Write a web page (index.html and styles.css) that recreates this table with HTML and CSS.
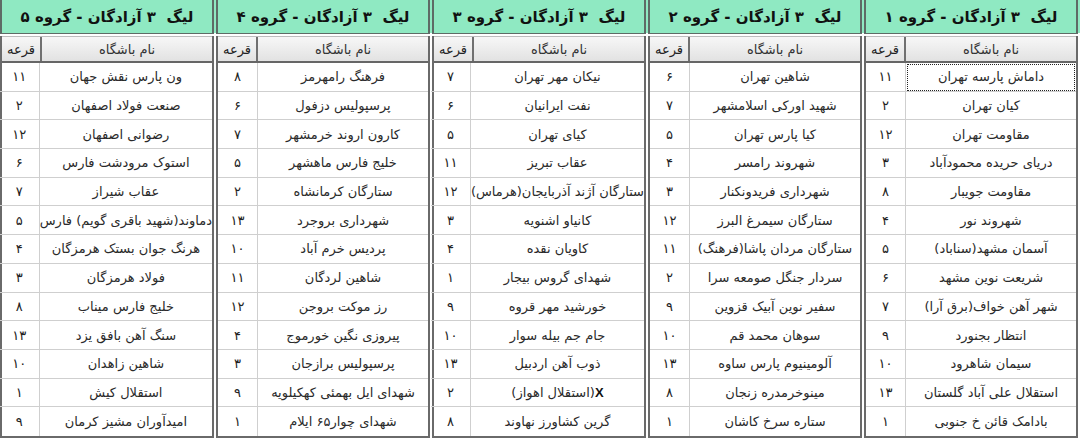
FILE: index.html
```html
<!DOCTYPE html>
<html lang="fa" dir="rtl">
<head>
<meta charset="utf-8">
<title>لیگ ۳ آزادگان</title>
<link rel="stylesheet" href="styles.css">
</head>
<body>
<div class="board">

  <section class="group">
    <div class="title">لیگ&nbsp; ۳ آزادگان - گروه ۱</div>
    <div class="table">
      <div class="row head"><div class="c-no">قرعه</div><div class="c-name">نام باشگاه</div></div>
      <div class="body">
        <div class="row"><div class="c-no">۱۱</div><div class="c-name selected"><span>داماش پارسه تهران</span></div></div>
        <div class="row"><div class="c-no">۲</div><div class="c-name"><span>کیان تهران</span></div></div>
        <div class="row"><div class="c-no">۱۲</div><div class="c-name"><span>مقاومت تهران</span></div></div>
        <div class="row"><div class="c-no">۳</div><div class="c-name"><span>دریای حریده محمودآباد</span></div></div>
        <div class="row"><div class="c-no">۸</div><div class="c-name"><span>مقاومت جویبار</span></div></div>
        <div class="row"><div class="c-no">۴</div><div class="c-name"><span>شهروند نور</span></div></div>
        <div class="row"><div class="c-no">۵</div><div class="c-name"><span>آسمان مشهد(سناباد)</span></div></div>
        <div class="row"><div class="c-no">۶</div><div class="c-name"><span>شریعت نوین مشهد</span></div></div>
        <div class="row"><div class="c-no">۷</div><div class="c-name"><span>شهر آهن خواف(برق آرا)</span></div></div>
        <div class="row"><div class="c-no">۹</div><div class="c-name"><span>انتظار بجنورد</span></div></div>
        <div class="row"><div class="c-no">۱۰</div><div class="c-name"><span>سیمان شاهرود</span></div></div>
        <div class="row"><div class="c-no">۱۳</div><div class="c-name"><span>استقلال علی آباد گلستان</span></div></div>
        <div class="row"><div class="c-no">۱</div><div class="c-name"><span>بادامک قائن خ جنوبی</span></div></div>
      </div>
    </div>
  </section>

  <section class="group">
    <div class="title">لیگ&nbsp; ۳ آزادگان - گروه ۲</div>
    <div class="table">
      <div class="row head"><div class="c-no">قرعه</div><div class="c-name">نام باشگاه</div></div>
      <div class="body">
        <div class="row"><div class="c-no">۶</div><div class="c-name"><span>شاهین تهران</span></div></div>
        <div class="row"><div class="c-no">۷</div><div class="c-name"><span>شهید اورکی اسلامشهر</span></div></div>
        <div class="row"><div class="c-no">۵</div><div class="c-name"><span>کیا پارس تهران</span></div></div>
        <div class="row"><div class="c-no">۴</div><div class="c-name"><span>شهروند رامسر</span></div></div>
        <div class="row"><div class="c-no">۳</div><div class="c-name"><span>شهرداری فریدونکنار</span></div></div>
        <div class="row"><div class="c-no">۱۲</div><div class="c-name"><span>ستارگان سیمرغ البرز</span></div></div>
        <div class="row"><div class="c-no">۱۱</div><div class="c-name"><span>ستارگان مردان پاشا(فرهنگ)</span></div></div>
        <div class="row"><div class="c-no">۲</div><div class="c-name"><span>سردار جنگل صومعه سرا</span></div></div>
        <div class="row"><div class="c-no">۹</div><div class="c-name"><span>سفیر نوین آبیک قزوین</span></div></div>
        <div class="row"><div class="c-no">۱۰</div><div class="c-name"><span>سوهان محمد قم</span></div></div>
        <div class="row"><div class="c-no">۱۳</div><div class="c-name"><span>آلومینیوم پارس ساوه</span></div></div>
        <div class="row"><div class="c-no">۸</div><div class="c-name"><span>مینوخرمدره زنجان</span></div></div>
        <div class="row"><div class="c-no">۱</div><div class="c-name"><span>ستاره سرخ کاشان</span></div></div>
      </div>
    </div>
  </section>

  <section class="group">
    <div class="title">لیگ&nbsp; ۳ آزادگان - گروه ۳</div>
    <div class="table">
      <div class="row head"><div class="c-no">قرعه</div><div class="c-name">نام باشگاه</div></div>
      <div class="body">
        <div class="row"><div class="c-no">۷</div><div class="c-name"><span>نیکان مهر تهران</span></div></div>
        <div class="row"><div class="c-no">۶</div><div class="c-name"><span>نفت ایرانیان</span></div></div>
        <div class="row"><div class="c-no">۵</div><div class="c-name"><span>کیای تهران</span></div></div>
        <div class="row"><div class="c-no">۱۱</div><div class="c-name"><span>عقاب تبریز</span></div></div>
        <div class="row"><div class="c-no">۱۲</div><div class="c-name"><span>ستارگان آژند آذربایجان(هرماس)</span></div></div>
        <div class="row"><div class="c-no">۳</div><div class="c-name"><span>کانیاو اشنویه</span></div></div>
        <div class="row"><div class="c-no">۴</div><div class="c-name"><span>کاویان نقده</span></div></div>
        <div class="row"><div class="c-no">۱</div><div class="c-name"><span>شهدای گروس بیجار</span></div></div>
        <div class="row"><div class="c-no">۹</div><div class="c-name"><span>خورشید مهر قروه</span></div></div>
        <div class="row"><div class="c-no">۱۰</div><div class="c-name"><span>جام جم بیله سوار</span></div></div>
        <div class="row"><div class="c-no">۱۳</div><div class="c-name"><span>ذوب آهن اردبیل</span></div></div>
        <div class="row"><div class="c-no">۲</div><div class="c-name"><b class="x">X</b><span>(استقلال اهواز)</span></div></div>
        <div class="row"><div class="c-no">۸</div><div class="c-name"><span>گرین کشاورز نهاوند</span></div></div>
      </div>
    </div>
  </section>

  <section class="group">
    <div class="title">لیگ&nbsp; ۳ آزادگان - گروه ۴</div>
    <div class="table">
      <div class="row head"><div class="c-no">قرعه</div><div class="c-name">نام باشگاه</div></div>
      <div class="body">
        <div class="row"><div class="c-no">۸</div><div class="c-name"><span>فرهنگ رامهرمز</span></div></div>
        <div class="row"><div class="c-no">۶</div><div class="c-name"><span>پرسپولیس دزفول</span></div></div>
        <div class="row"><div class="c-no">۷</div><div class="c-name"><span>کارون اروند خرمشهر</span></div></div>
        <div class="row"><div class="c-no">۵</div><div class="c-name"><span>خلیج فارس ماهشهر</span></div></div>
        <div class="row"><div class="c-no">۲</div><div class="c-name"><span>ستارگان کرمانشاه</span></div></div>
        <div class="row"><div class="c-no">۱۳</div><div class="c-name"><span>شهرداری بروجرد</span></div></div>
        <div class="row"><div class="c-no">۱۰</div><div class="c-name"><span>پردیس خرم آباد</span></div></div>
        <div class="row"><div class="c-no">۱۱</div><div class="c-name"><span>شاهین لردگان</span></div></div>
        <div class="row"><div class="c-no">۱۲</div><div class="c-name"><span>رز موکت بروجن</span></div></div>
        <div class="row"><div class="c-no">۴</div><div class="c-name"><span>پیروزی نگین خورموج</span></div></div>
        <div class="row"><div class="c-no">۳</div><div class="c-name"><span>پرسپولیس برازجان</span></div></div>
        <div class="row"><div class="c-no">۹</div><div class="c-name"><span>شهدای ایل بهمئی کهکیلویه</span></div></div>
        <div class="row"><div class="c-no">۱</div><div class="c-name"><span>شهدای چوار۶۵ ایلام</span></div></div>
      </div>
    </div>
  </section>

  <section class="group">
    <div class="title">لیگ&nbsp; ۳ آزادگان - گروه ۵</div>
    <div class="table">
      <div class="row head"><div class="c-no">قرعه</div><div class="c-name">نام باشگاه</div></div>
      <div class="body">
        <div class="row"><div class="c-no">۱۱</div><div class="c-name"><span>ون پارس نقش جهان</span></div></div>
        <div class="row"><div class="c-no">۲</div><div class="c-name"><span>صنعت فولاد اصفهان</span></div></div>
        <div class="row"><div class="c-no">۱۲</div><div class="c-name"><span>رضوانی اصفهان</span></div></div>
        <div class="row"><div class="c-no">۶</div><div class="c-name"><span>استوک مرودشت فارس</span></div></div>
        <div class="row"><div class="c-no">۷</div><div class="c-name"><span>عقاب شیراز</span></div></div>
        <div class="row"><div class="c-no">۵</div><div class="c-name"><span>دماوند(شهید باقری گویم) فارس</span></div></div>
        <div class="row"><div class="c-no">۴</div><div class="c-name"><span>هرنگ جوان بستک هرمزگان</span></div></div>
        <div class="row"><div class="c-no">۳</div><div class="c-name"><span>فولاد هرمزگان</span></div></div>
        <div class="row"><div class="c-no">۸</div><div class="c-name"><span>خلیج فارس میناب</span></div></div>
        <div class="row"><div class="c-no">۱۳</div><div class="c-name"><span>سنگ آهن بافق یزد</span></div></div>
        <div class="row"><div class="c-no">۱۰</div><div class="c-name"><span>شاهین زاهدان</span></div></div>
        <div class="row"><div class="c-no">۱</div><div class="c-name"><span>استقلال کیش</span></div></div>
        <div class="row"><div class="c-no">۹</div><div class="c-name"><span>امیدآوران مشیز کرمان</span></div></div>
      </div>
    </div>
  </section>

</div>
</body>
</html>
```

FILE: styles.css
```css
* { box-sizing: border-box; }

html, body {
  margin: 0;
  padding: 0;
}

body {
  width: 1080px;
  height: 440px;
  overflow: hidden;
  background: #ffffff;
  font-family: Tahoma, "DejaVu Sans", sans-serif;
  color: #2a2a2a;
}

.board {
  direction: rtl;
  display: flex;
  gap: 2px;
  padding-right: 2px;
  height: 440px;
  background:
    linear-gradient(to bottom, #8fe9c2 0, #8fe9c2 33px, transparent 33px),
    linear-gradient(to right, #d93a4a 0, #d93a4a 14px, #ffffff 14px, #ffffff 70px, #7cc98a 70px, #7cc98a 110px, #ffffff 110px, #ffffff 226px, #7cc98a 226px, #7cc98a 296px, #ffffff 296px, #ffffff 335px, #d93a4a 335px, #d93a4a 350px, #ffffff 350px);
}

.group {
  width: 214px;
  display: flex;
  flex-direction: column;
  background: #ffffff;
}

.title {
  height: 34px;
  background: #8fe9c2;
  border-left: 2px solid #5e6b66;
  border-right: 2px solid #5e6b66;
  border-bottom: 1px solid #5e6b66;
  display: flex;
  align-items: center;
  justify-content: center;
  font-weight: bold;
  font-size: 15px;
  color: #111;
  white-space: nowrap;
}

.table {
  margin-top: 2px;
  border-left: 2px solid #6a6a6a;
  border-right: 2px solid #6a6a6a;
  border-bottom: 2px solid #6a6a6a;
  background: #ffffff;
}

.row {
  display: flex;
  flex-direction: row-reverse;
  height: 100%;
}

.row.head {
  height: 27px;
  background: linear-gradient(to bottom, #f7f7f7, #e2e2e2);
  border-top: 1px solid #bdbdbd;
  border-bottom: 2px solid #666;
  font-size: 12px;
  color: #333;
}

.row.head .c-no,
.row.head .c-name {
  border-bottom: none;
}

.row.head .c-no {
  border-right: 2px solid #707070;
}

.body {
  display: grid;
  grid-template-rows: repeat(13, 1fr);
  height: 373px;
}

.c-no {
  width: 40px;
  flex: none;
  display: flex;
  align-items: center;
  justify-content: center;
  border-right: 1px solid #cfcfcf;
  border-bottom: 1px solid #cfcfcf;
  font-size: 13px;
  color: #222;
}

.c-name {
  flex: 1;
  min-width: 0;
  display: flex;
  align-items: center;
  justify-content: center;
  overflow: hidden;
  border-bottom: 1px solid #cfcfcf;
  font-size: 13px;
  white-space: nowrap;
}

.c-name span,
.c-name b {
  flex: none;
}

.body .row:last-child .c-no,
.body .row:last-child .c-name {
  border-bottom: none;
}

.c-name.selected {
  outline: 1px dotted #222;
  outline-offset: -2px;
}

.x {
  font-family: "Liberation Sans", Arial, sans-serif;
  font-weight: bold;
  font-size: 13px;
  color: #111;
}
```
